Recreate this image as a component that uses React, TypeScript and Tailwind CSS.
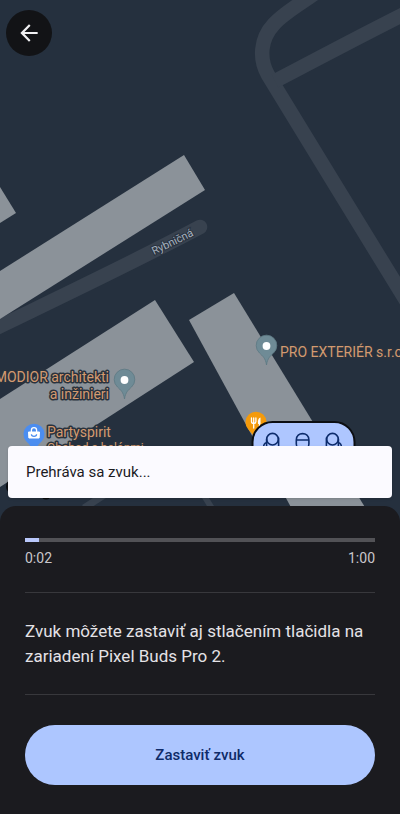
import { useState } from 'react';
import { MdArrowBack } from 'react-icons/md';

const DURATION = 60;

function formatTime(seconds: number) {
  const m = Math.floor(seconds / 60);
  const s = Math.floor(seconds % 60);
  return `${m}:${String(s).padStart(2, '0')}`;
}

// Grey teardrop marker, origin at the centre of its head
function Pin({ x, y }: { x: number; y: number }) {
  return (
    <g transform={`translate(${x} ${y})`}>
      <path
        d="M0 19C-1 12-4 10-7 7A10.3 10.3 0 1 1 7 7C4 10 1 12 0 19Z"
        fill="#6f8b96"
        stroke="#5d7883"
        strokeWidth="0.8"
      />
      <circle r="3.9" fill="#fff" />
    </g>
  );
}

function MapLabels() {
  return (
    <g
      className="font-[Roboto,sans-serif] text-[14px]"
      fill="#d39a70"
      stroke="#29323d"
      strokeWidth="3"
      strokeLinejoin="round"
      paintOrder="stroke"
    >
      <text x="109" y="382" textAnchor="end">MODIOR architekti</text>
      <text x="109" y="399" textAnchor="end">a inžinieri</text>
      <text x="47" y="437">Partyspirit</text>
      <text x="47" y="452" className="text-[12px]">Obchod s balónmi</text>
      <text x="280" y="357">PRO EXTERIÉR s.r.o.</text>
    </g>
  );
}

// Earbuds and case, shown at the last known location
function DeviceMarker() {
  return (
    <g>
      <rect x="252.5" y="422" width="102" height="50" rx="20" fill="#aec6ff" stroke="#0c0e12" strokeWidth="2" />
      <g fill="none" stroke="#0d2c6c" strokeWidth="1.6" strokeLinecap="round">
        <circle cx="272.5" cy="439.2" r="5.8" />
        <path d="M278.600 438v12M266.600 439v9M266.600 442.500c-2 .5-3 2-3 5" />
        <path d="M296.300 440c0-8.500 12.600-8.500 12.600 0v4c0 8-12.600 8-12.600 0zM296.300 440h12.600" />
        <circle cx="332.500" cy="439.200" r="5.800" />
        <path d="M326.400 438v12M338.400 439v9M338.400 442.500c2 .5 3 2 3 5" />
      </g>
    </g>
  );
}

function MapView() {
  return (
    <svg
      viewBox="0 0 400 522"
      preserveAspectRatio="xMidYMax slice"
      className="block h-full w-full"
      role="img"
      aria-label="Mapa"
    >
      <rect width="400" height="522" fill="#25303e" />

      {/* Roads */}
      <g fill="none" stroke="#38424f" strokeWidth="14.500" strokeLinejoin="round">
        <path d="M314-6C300 4 284 13 274 24C260 39 259 59 268 75L334 183L410 307" />
        <path d="M275 81C310 63 350 41 412 10" />
        <path d="M-10 331C60 297 130 264 200 227" strokeLinecap="round" />
        <path d="M84 508L118 486" strokeWidth="7" />
        <path d="M198 486L213 510" strokeWidth="6" />
      </g>

      {/* Buildings */}
      <g fill="#8b9299">
        <path d="M0 187L16 213L0 223Z" />
        <path d="M0 271L184 155L205 190L0 319Z" />
        <path d="M0 399L155 300L194 362L0 487Z" />
        <path d="M189 320L234 293L374 522H299Z" />
      </g>

      <text
        x="154"
        y="255"
        transform="rotate(-26 154 255)"
        className="font-[Roboto,sans-serif] text-[11px]"
        fill="#a5b0bd"
        stroke="#29323f"
        strokeWidth="2"
        paintOrder="stroke"
      >
        Rybničná
      </text>

      <Pin x={266.500} y={346} />
      <Pin x={124.500} y={380} />

      {/* Shop */}
      <path d="M34 453C32 447 29 444 26 441A10.500 10.500 0 1 1 42 441C39 444 36 447 34 453Z" fill="#4b8df0" />
      <path d="M28.500 432h11l-.4 6h-10.200z" fill="#fff" stroke="#fff" strokeLinejoin="round" />
      <path d="M31.400 432v-1.800a2.600 2.600 0 0 1 5.200 0v1.800" fill="none" stroke="#fff" strokeWidth="1.300" />
      <path d="M31.400 434.300a2.600 2 0 0 0 5.200 0" fill="none" stroke="#4b8df0" strokeWidth="1.200" />

      {/* Restaurant */}
      <path d="M256 441C254 435 251 433 248 429A10.500 10.500 0 1 1 264 429C261 433 258 435 256 441Z" fill="#f49a0b" />
      <g fill="none" stroke="#fff" strokeWidth="1.300" strokeLinecap="round">
        <path d="M251.500 418v3.500q0 2 2.200 2t2.200-2v-3.500M253.700 418v10M259.500 422v6" />
      </g>
      <path d="M260.500 417.500v6.500h-2.500c-.6-3.500.4-6 2.500-6.500z" fill="#fff" />

      <MapLabels />
      <DeviceMarker />

      {/* Edges of the attribution mark under the snackbar */}
      <path d="M10 481C6 484 6 489 10 492" fill="none" stroke="#0b0d10" strokeWidth="2" />
      <ellipse cx="46" cy="496" rx="4" ry="3.500" fill="#0b0d10" />
    </svg>
  );
}

export default function App() {
  const [playing, setPlaying] = useState(true);
  const elapsed = 2.4;

  return (
    <div className="flex min-h-screen flex-col bg-[#1b1b1f] font-[Roboto,sans-serif] text-[#e4e2e6]">
      <main className="relative -mb-4 min-h-80 flex-1">
        <div className="absolute inset-0">
          <MapView />
        </div>
        <button
          type="button"
          aria-label="Späť"
          className="absolute top-[10px] left-[6px] flex size-[46px] items-center justify-center rounded-full bg-[#121316] text-[#f1f1f3]"
        >
          <MdArrowBack size={26} />
        </button>
        {playing && (
          <div
            role="status"
            className="absolute inset-x-2 bottom-6 flex h-[52px] items-center rounded bg-[#fbfaff] px-[18px] text-[15px] text-[#1b1b1f] shadow-sm"
          >
            Prehráva sa zvuk...
          </div>
        )}
      </main>

      <section className="relative rounded-t-2xl bg-[#1b1b1f] px-[25px] pt-8 pb-[29px]">
        <progress
          value={elapsed}
          max={DURATION}
          aria-label="Prehrávanie zvuku"
          className="block h-1 w-full appearance-none [&::-webkit-progress-bar]:bg-[#525256] [&::-webkit-progress-value]:bg-[#b9c8fb]"
        />
        <div className="mt-2 flex justify-between text-[14px] leading-4 text-[#c9c7cc]">
          <span>{formatTime(elapsed)}</span>
          <span>{formatTime(DURATION)}</span>
        </div>

        <p className="mt-[26px] border-y border-[#38383c] pt-[26px] pb-[25px] text-[17px] leading-[25px]">
          Zvuk môžete zastaviť aj stlačením tlačidla na zariadení Pixel Buds Pro 2.
        </p>

        <button
          type="button"
          onClick={() => setPlaying(false)}
          className="mt-[30px] h-[60px] w-full rounded-full bg-[#adc6ff] text-[15px] font-medium text-[#0f2b69]"
        >
          Zastaviť zvuk
        </button>
      </section>
    </div>
  );
}
